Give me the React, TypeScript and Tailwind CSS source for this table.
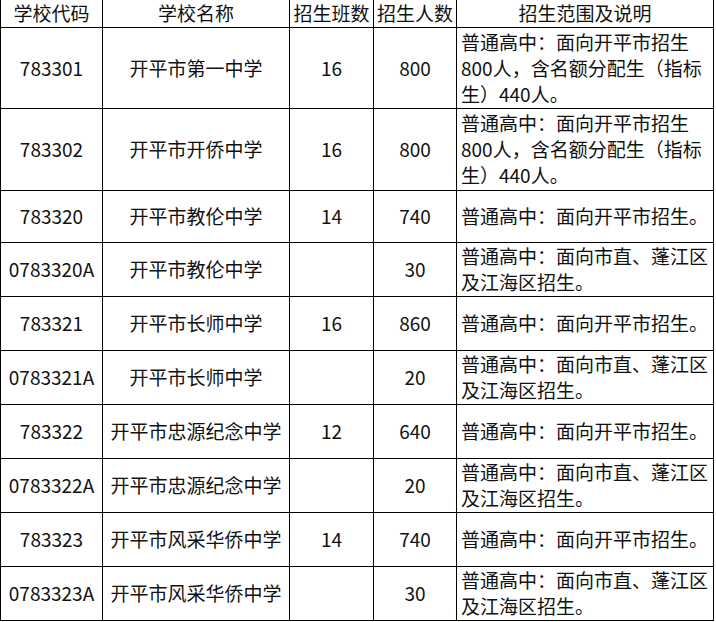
const rows: {
  code: string;
  name: string;
  classes: string;
  count: string;
  desc: string[];
  h: string;
}[] = [
  {
    code: "783301",
    name: "开平市第一中学",
    classes: "16",
    count: "800",
    desc: ["普通高中：面向开平市招生", "800人，含名额分配生（指标", "生）440人。"],
    h: "h-[81px]",
  },
  {
    code: "783302",
    name: "开平市开侨中学",
    classes: "16",
    count: "800",
    desc: ["普通高中：面向开平市招生", "800人，含名额分配生（指标", "生）440人。"],
    h: "h-[82px]",
  },
  {
    code: "783320",
    name: "开平市教伦中学",
    classes: "14",
    count: "740",
    desc: ["普通高中：面向开平市招生。"],
    h: "h-[52px]",
  },
  {
    code: "0783320A",
    name: "开平市教伦中学",
    classes: "",
    count: "30",
    desc: ["普通高中：面向市直、蓬江区", "及江海区招生。"],
    h: "h-[54px]",
  },
  {
    code: "783321",
    name: "开平市长师中学",
    classes: "16",
    count: "860",
    desc: ["普通高中：面向开平市招生。"],
    h: "h-[54px]",
  },
  {
    code: "0783321A",
    name: "开平市长师中学",
    classes: "",
    count: "20",
    desc: ["普通高中：面向市直、蓬江区", "及江海区招生。"],
    h: "h-[54px]",
  },
  {
    code: "783322",
    name: "开平市忠源纪念中学",
    classes: "12",
    count: "640",
    desc: ["普通高中：面向开平市招生。"],
    h: "h-[54px]",
  },
  {
    code: "0783322A",
    name: "开平市忠源纪念中学",
    classes: "",
    count: "20",
    desc: ["普通高中：面向市直、蓬江区", "及江海区招生。"],
    h: "h-[54px]",
  },
  {
    code: "783323",
    name: "开平市风采华侨中学",
    classes: "14",
    count: "740",
    desc: ["普通高中：面向开平市招生。"],
    h: "h-[54px]",
  },
  {
    code: "0783323A",
    name: "开平市风采华侨中学",
    classes: "",
    count: "30",
    desc: ["普通高中：面向市直、蓬江区", "及江海区招生。"],
    h: "h-[54px]",
  },
];

const cell = "border border-black p-0 text-center align-middle whitespace-nowrap";
// the picture is cropped at the top, so the header has no top rule
const head = `${cell} border-t-0 font-normal leading-[24px]`;

export default function App() {
  return (
    <div
      className="w-[716px] h-[622px] bg-white text-[#111] overflow-hidden"
      style={{ fontFamily: '"Noto Sans CJK SC", "Noto Sans", sans-serif' }}
    >
      <table className="table-fixed border-collapse w-[713px] text-[19px] leading-[26px]">
        <colgroup>
          <col className="w-[102px]" />
          <col className="w-[187px]" />
          <col className="w-[84px]" />
          <col className="w-[83px]" />
          <col className="w-[257px]" />
        </colgroup>
        <thead>
          <tr className="h-[27px]">
            <th className={head}>学校代码</th>
            <th className={head}>学校名称</th>
            <th className={head}>招生班数</th>
            <th className={head}>招生人数</th>
            <th className={head}>招生范围及说明</th>
          </tr>
        </thead>
        <tbody>
          {rows.map((r) => (
            <tr key={r.code} className={r.h}>
              <td className={cell}>{r.code}</td>
              <td className={cell}>{r.name}</td>
              <td className={cell}>{r.classes}</td>
              <td className={cell}>{r.count}</td>
              <td className="border border-black py-0 pl-[4px] pr-0 text-left align-middle whitespace-nowrap">
                {r.desc.map((line, i) => (
                  <div key={i}>{line}</div>
                ))}
              </td>
            </tr>
          ))}
        </tbody>
      </table>
    </div>
  );
}
